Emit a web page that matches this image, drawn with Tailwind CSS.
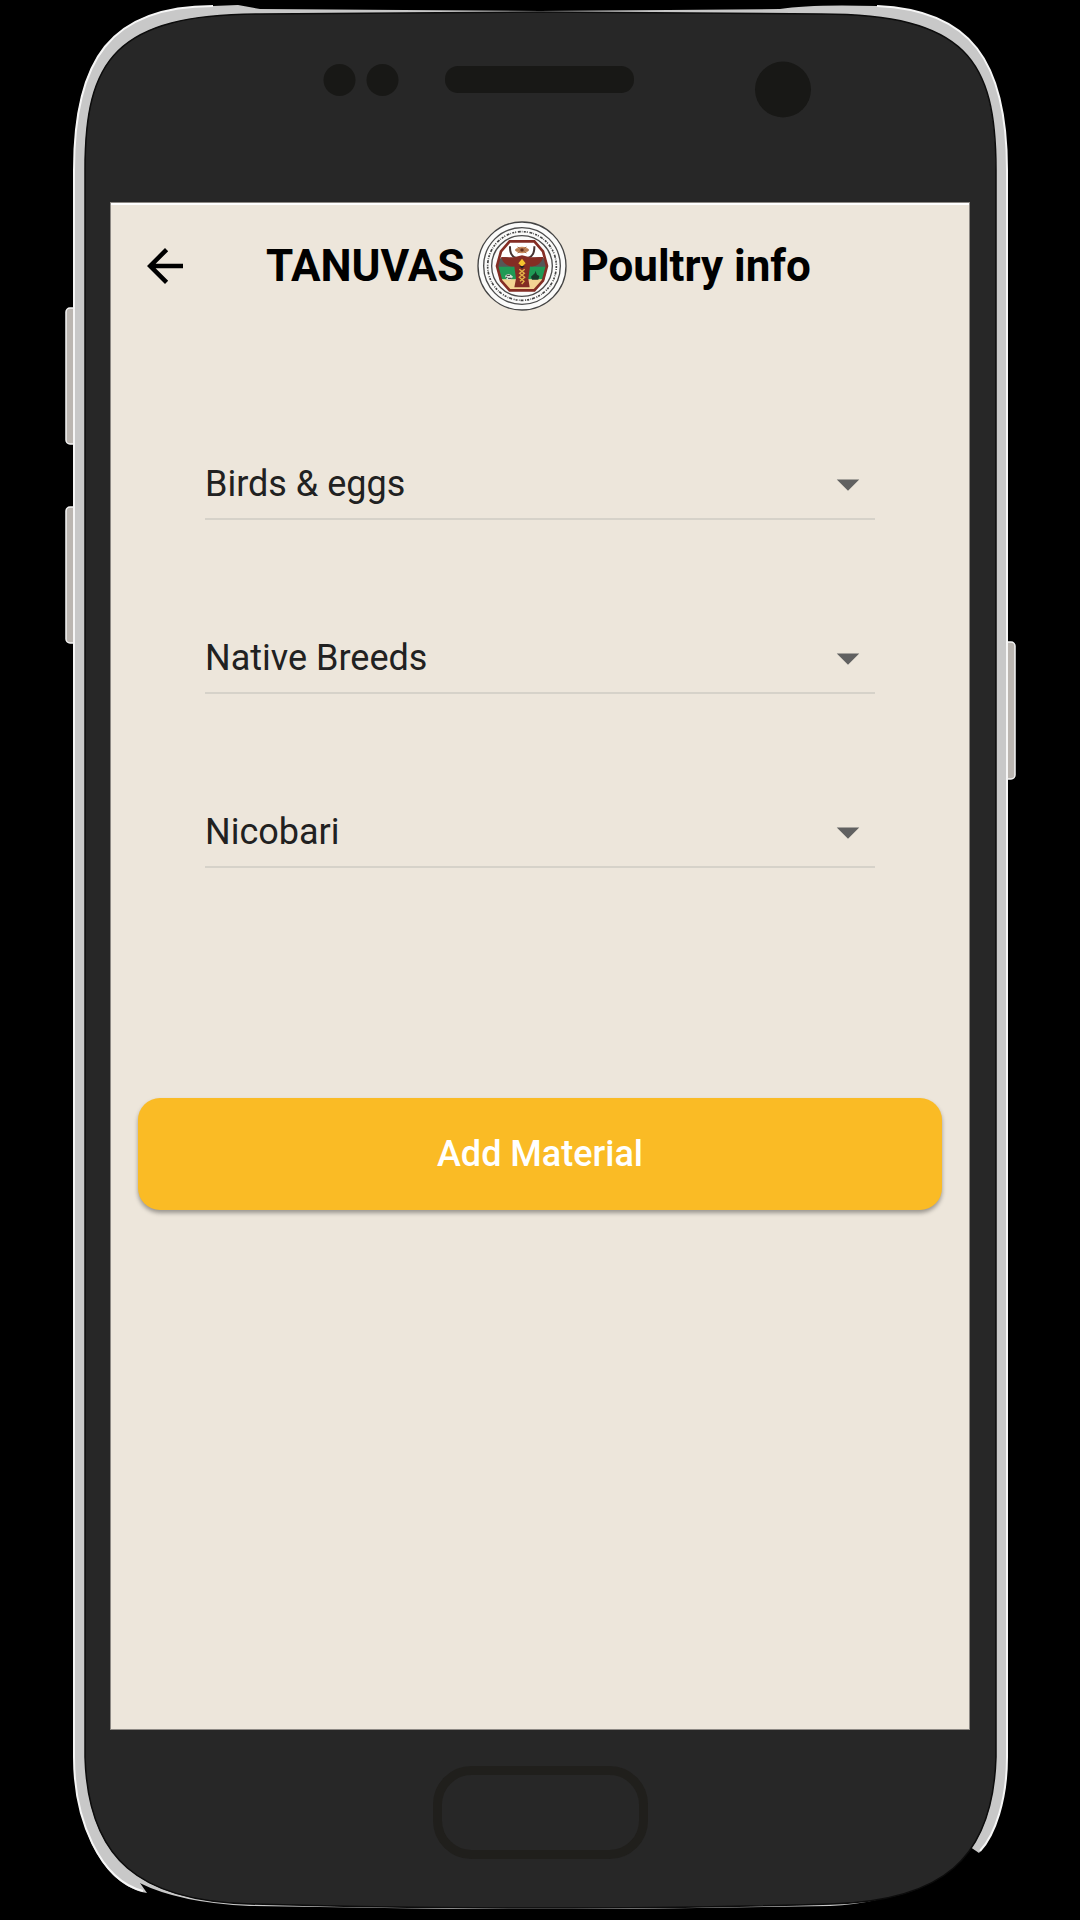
<!DOCTYPE html>
<html lang="en">
<head>
<meta charset="utf-8">
<meta name="viewport" content="width=device-width, initial-scale=1">
<title>TANUVAS Poultry info</title>
<script src="https://cdn.jsdelivr.net/npm/@tailwindcss/browser@4"></script>
</head>
<body class="bg-black font-['Roboto',sans-serif]">
<div class="relative flex min-h-screen flex-col px-[110px] pt-[202px] pb-[190px]">
  <!-- phone body -->
  <svg class="absolute inset-0 h-full w-full" viewBox="0 0 1080 1920" preserveAspectRatio="none" aria-hidden="true">
    <g fill="#bbb6b1" stroke="#f4f4f4" stroke-width="1.5">
      <rect x="66" y="308" width="20" height="136" rx="4"/>
      <rect x="66" y="507" width="20" height="136" rx="4"/>
      <rect x="995" y="642" width="20" height="137" rx="4"/>
    </g>
    <path fill="#c8c8c8" d="M74 170C74 60 110 6 213 6L238 5L260 9L540 11L780 9Q810 4 877 6C970 10 1007 60 1007 170V1757C1007 1800 995 1835 979 1853L960 1840L140 1883L147 1893C100 1885 74 1820 74 1757Z"/>
    <path fill="none" stroke="#f6f6f6" stroke-width="2" d="M213 6C110 6 74 60 74 170V1757C74 1820 100 1880 143 1891M877 6C970 10 1007 60 1007 170V1757C1007 1800 995 1835 980 1851"/>
    <path fill="none" stroke="#c8c8c8" stroke-width="4" d="M140 1881Q180 1901 250 1904L450 1907H630L830 1904C895 1901 935 1880 975 1836"/>
    <path fill="#272727" stroke="#0c0c0c" stroke-width="1.5" d="M85 170C85 60 115 14 260 14L540 12L821 14C966 14 996 60 996 170V1757C993 1860 941 1901 831 1904Q700 1908 540 1908Q380 1908 250 1904C140 1901 88 1860 85 1757Z"/>
    <g fill="#181816">
      <circle cx="339.5" cy="80" r="16"/><circle cx="382.5" cy="80" r="16"/>
      <rect x="445" y="66" width="189" height="27" rx="13"/>
      <circle cx="783" cy="89.500" r="28"/>
    </g>
    <rect x="437.500" y="1770.500" width="206" height="84" rx="34" fill="none" stroke="#201f1c" stroke-width="9"/>
  </svg>

  <div class="relative flex flex-1 flex-col border border-[#8d8984] bg-[#ede6db]">
    <header class="flex h-[124px] items-center border-t-2 border-white pl-[27px]">
      <button type="button" aria-label="Back" class="shrink-0">
        <svg class="size-[54px]" viewBox="0 0 24 24"><path d="M20 11H7.830l5.590-5.590L12 4l-8 8 8 8 1.410-1.410L7.830 13H20z"/></svg>
      </button>
      <h1 class="ml-[74px] flex items-center text-[44px] leading-[54px] font-bold whitespace-nowrap text-black">
        <span>TANUVAS</span>
        <svg class="mx-[13px] size-[90px]" viewBox="28 31 270 270" role="img" aria-label="TANUVAS emblem">
          <circle cx="163" cy="166" r="132" fill="#fbfbfa" stroke="#444" stroke-width="4"/>
          <circle cx="163" cy="166" r="115" fill="none" stroke="#4c4c4c" stroke-width="4"/>
          <circle cx="163" cy="166" r="103" fill="none" stroke="#444" stroke-width="5" stroke-dasharray="6 3 3 5 9 3 2 4"/>
          <circle cx="163" cy="166" r="91" fill="none" stroke="#4c4c4c" stroke-width="4"/>
          <path d="M126 92H200L226 122 238 166 226 210 200 240H126L100 210 88 166 100 122Z" fill="#fff"/>
          <path d="M91 150Q108 130 138 150H190Q220 130 236 150V180H90Z" fill="#565656"/>
          <path d="M88 168H238L230 207H96Z" fill="#1f9a55"/>
          <path d="M96 206H230L204 236H124Z" fill="#f3d493"/>
          <path d="M126 92H200L226 122 238 166 226 210 200 239H126L100 210 88 166 100 122Z" fill="none" stroke="#842d24" stroke-width="8"/>
          <path d="M127 107Q126 136 145 142M200 107Q201 136 181 142" fill="none" stroke="#453331" stroke-width="6"/>
          <path d="M100 139L139 140 163 134 187 140 227 139Q217 170 187 167L182 204 186 230H140L145 204 140 167Q110 170 100 139Z" fill="#842d24"/>
          <ellipse cx="163" cy="118" rx="20" ry="10" fill="#cc8f60"/>
          <path d="M142 118H184M150 109L176 127M176 109L150 127" stroke="#9c6847" stroke-width="3"/>
          <circle cx="163" cy="118" r="5" fill="#632d1b"/>
          <path d="M163 144L174 158 163 168 152 158Z" fill="#f4c42e"/>
          <path d="M155 166L171 166 163 174Z" fill="#222"/>
          <path d="M155 176L170 188 155 200 169 212 162 220M171 176L156 188 171 200 157 212" fill="none" stroke="#e5b448" stroke-width="4"/>
          <path d="M112 196Q123 183 136 198L129 207H118Z" fill="#d9e5d9"/>
          <path d="M117 194H127M121 203H132M115 200H119" stroke="#333" stroke-width="3"/>
          <path d="M190 198L202 187 203 180 208 192 215 196 212 207H193Z" fill="#173a29"/>
        </svg>
        <span>Poultry info</span>
      </h1>
    </header>

    <main class="flex flex-1 flex-col px-[27px] pt-[123px]">
      <form class="flex flex-col">
        <div class="flex flex-col gap-[104px] px-[67px]">
          <div class="relative h-[70px] border-b-2 border-[#d6d2c9]">
            <select aria-label="Category" class="h-full w-full appearance-none bg-transparent text-[36px] leading-[42px] text-[#212121]"><option>Birds &amp; eggs</option></select>
            <svg class="pointer-events-none absolute top-[7px] right-0 size-[54px] fill-[#616161]" viewBox="0 0 24 24"><path d="M7 10l5 5 5-5z"/></svg>
          </div>
          <div class="relative h-[70px] border-b-2 border-[#d6d2c9]">
            <select aria-label="Breed type" class="h-full w-full appearance-none bg-transparent text-[36px] leading-[42px] text-[#212121]"><option>Native Breeds</option></select>
            <svg class="pointer-events-none absolute top-[7px] right-0 size-[54px] fill-[#616161]" viewBox="0 0 24 24"><path d="M7 10l5 5 5-5z"/></svg>
          </div>
          <div class="relative h-[70px] border-b-2 border-[#d6d2c9]">
            <select aria-label="Breed" class="h-full w-full appearance-none bg-transparent text-[36px] leading-[42px] text-[#212121]"><option>Nicobari</option></select>
            <svg class="pointer-events-none absolute top-[7px] right-0 size-[54px] fill-[#616161]" viewBox="0 0 24 24"><path d="M7 10l5 5 5-5z"/></svg>
          </div>
        </div>
        <button type="button" class="mt-[230px] h-[112px] rounded-[22px] bg-[#fabb25] text-[36px] leading-[42px] font-medium text-white shadow-[0_3px_4px_rgba(0,0,0,0.35)]">Add Material</button>
      </form>
    </main>
  </div>
</div>
</body>
</html>
